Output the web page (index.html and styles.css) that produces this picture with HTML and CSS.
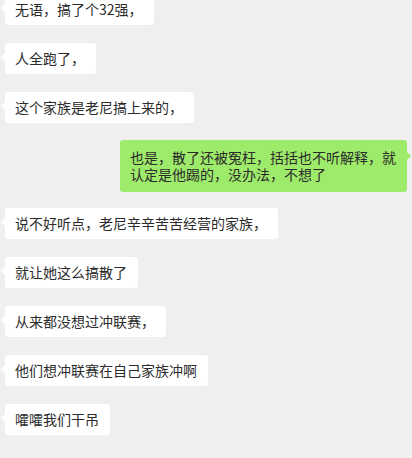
FILE: index.html
```html
<!DOCTYPE html>
<html lang="zh-CN">
<head>
    <meta charset="UTF-8">
    <meta name="viewport" content="width=device-width, initial-scale=1.0">
    <title>聊天记录</title>
    <link rel="stylesheet" href="styles.css">
</head>
<body>
    <!-- chat log -->
    <div class="chat">
        <div class="msg left">无语，搞了个32强，</div>
        <div class="msg left">人全跑了，</div>
        <div class="msg left">这个家族是老尼搞上来的，</div>
        <div class="msg right">也是，散了还被冤枉，括括也不听解释，就认定是他踢的，没办法，不想了</div>
        <div class="msg left">说不好听点，老尼辛辛苦苦经营的家族，</div>
        <div class="msg left">就让她这么搞散了</div>
        <div class="msg left">从来都没想过冲联赛，</div>
        <div class="msg left">他们想冲联赛在自己家族冲啊</div>
        <div class="msg left">嚯嚯我们干吊</div>
    </div>
</body>
</html>
```

FILE: styles.css
```css
* {
    margin: 0;
    padding: 0;
    box-sizing: border-box;
}

body {
    width: 412px;
    height: 458px;
    overflow: hidden;
    background: #efefef;
    font-family: "Noto Sans CJK SC", "Microsoft YaHei", sans-serif;
    font-size: 14px;
    color: #2b2b2b;
}

.chat {
    display: flex;
    flex-direction: column;
    align-items: flex-start;
    gap: 18px;
    margin-top: -6px;
    padding: 0 5px 0 5px;
}

.msg {
    position: relative;
    padding: 7px 11px 7px 10px;
    line-height: 17px;
    border-radius: 3px;
}

.left {
    background: #ffffff;
}

/* little tail on the side of each bubble */
.left::before {
    content: "";
    position: absolute;
    left: -4px;
    top: 10px;
    border-top: 4px solid transparent;
    border-bottom: 4px solid transparent;
    border-right: 4px solid #ffffff;
}

.right {
    align-self: flex-end;
    width: 287px;
    padding: 9px 11px 9px 10px;
    margin: -1px 0 -2px 0;
    background: #9eea6a;
}

.right::after {
    content: "";
    position: absolute;
    right: -4px;
    top: 12px;
    border-top: 4px solid transparent;
    border-bottom: 4px solid transparent;
    border-left: 4px solid #9eea6a;
}
```
